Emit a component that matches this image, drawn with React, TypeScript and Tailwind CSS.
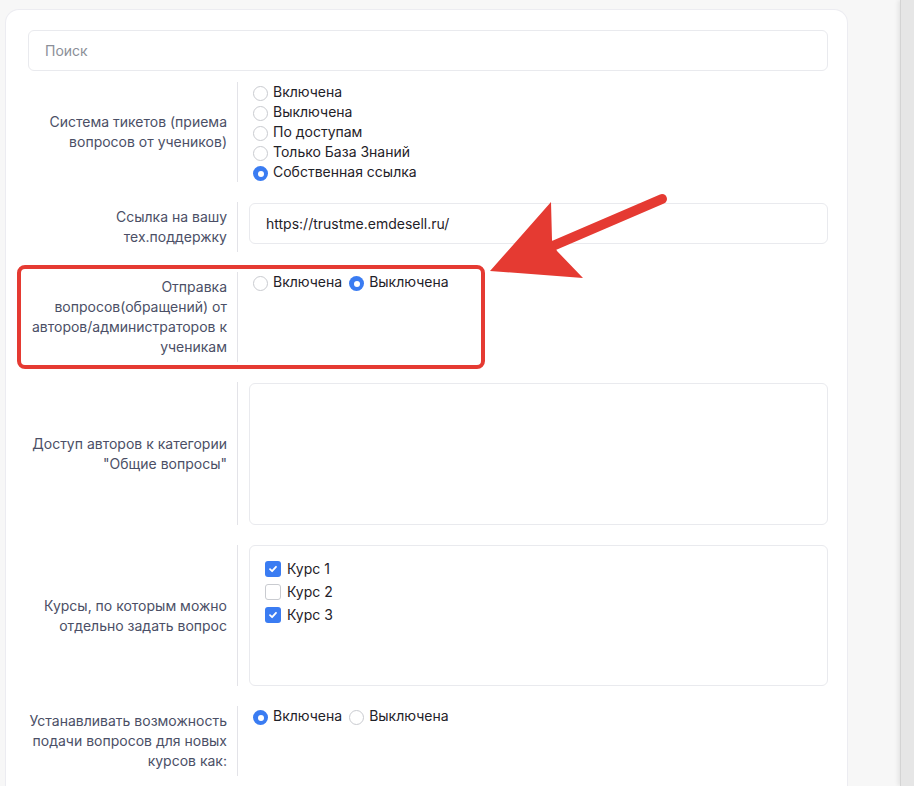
import React from 'react';

type RadioOpt = { label: string; checked?: boolean };

function Radio({ label, checked }: RadioOpt) {
  return (
    <label className="flex items-center h-[20px] mr-[3px] cursor-pointer">
      <span
        className={
          checked
            ? 'ml-[4px] mr-[5px] mt-[3px] w-[15px] h-[15px] rounded-full bg-[#3a7cf2] flex items-center justify-center shrink-0'
            : 'ml-[4px] mr-[5px] mt-[3px] w-[15px] h-[15px] rounded-full border border-[#c9cbd0] bg-white shrink-0'
        }
      >
        {checked && <span className="w-[6px] h-[6px] rounded-full bg-white" />}
      </span>
      <span className="text-[#1f2229]">{label}</span>
    </label>
  );
}

function Checkbox({ label, checked }: RadioOpt) {
  return (
    <label className="flex items-center h-[23px]">
      <span
        className={
          checked
            ? 'mr-[6px] w-[16px] h-[16px] rounded-[3px] bg-[#3a7cf2] flex items-center justify-center shrink-0'
            : 'mr-[6px] w-[16px] h-[16px] rounded-[3px] border border-[#c9cbd0] bg-white shrink-0'
        }
      >
        {checked && (
          <svg width="10" height="10" viewBox="0 0 10 10" fill="none">
            <path d="M2 5.2L4.1 7.2L8 2.8" stroke="white" strokeWidth="1.8" strokeLinecap="round" strokeLinejoin="round" />
          </svg>
        )}
      </span>
      <span className="text-[#1f2229]">{label}</span>
    </label>
  );
}

// строка формы: подпись слева, контент справа
function Row({ label, children, className = '' }: { label: React.ReactNode; children: React.ReactNode; className?: string }) {
  return (
    <div className={`relative grid grid-cols-[210px_1fr] ${className}`}>
      <div className="flex items-center justify-end text-right pr-[10px] py-[5px] border-r border-[#e3e3e8] text-[#4b4f66] leading-[20px]">
        <span>{label}</span>
      </div>
      <div className="pl-[11px]">{children}</div>
    </div>
  );
}

export default function App() {
  return (
    <div className="relative w-[914px] h-[786px] overflow-hidden flex bg-[#f7f7f7] font-['Inter',sans-serif] text-[14px] leading-[20px]">
      <div className="flex-1 pt-[9px] pl-[5px] pr-[52px]">
        <div className="bg-white rounded-t-[14px] border border-[#ececf1] border-b-0 pl-[22px] pr-[19px] pt-[20px] h-[900px]">
          {/* Поиск */}
          <input
            type="text"
            placeholder="Поиск"
            className="w-full h-[41px] px-[16px] rounded-[6px] border border-[#e9eaee] outline-none placeholder:text-[#8b8f98] text-[#1f2229]"
          />

          <div className="flex flex-col gap-[20px] mt-[11px]">
            <Row label="Система тикетов (приема вопросов от учеников)">
              <div className="flex flex-col">
                <Radio label="Включена" />
                <Radio label="Выключена" />
                <Radio label="По доступам" />
                <Radio label="Только База Знаний" />
                <Radio label="Собственная ссылка" checked />
              </div>
            </Row>

            <Row label="Ссылка на вашу тех.поддержку">
              <input
                type="text"
                defaultValue="https://trustme.emdesell.ru/"
                className="w-full h-[41px] mt-[1px] px-[16px] rounded-[6px] border border-[#e9eaee] outline-none text-[#1f2229]"
              />
            </Row>

            <Row label="Отправка вопросов(обращений) от авторов/администраторов к ученикам">
              <div className="flex">
                <Radio label="Включена" />
                <Radio label="Выключена" checked />
              </div>
              <div className="absolute left-[-11px] top-[-7px] w-[468px] h-[104px] border-4 border-[#e53a32] rounded-[8px] pointer-events-none" />
            </Row>

            <Row label={<>Доступ авторов к категории<br />"Общие вопросы"</>}>
              <textarea className="block w-full h-[142px] mt-[1px] rounded-[6px] border border-[#e9eaee] outline-none resize-none" />
            </Row>

            <Row label="Курсы, по которым можно отдельно задать вопрос">
              <div className="h-[141px] rounded-[6px] border border-[#e9eaee] pl-[15px] pt-[11px]">
                <Checkbox label="Курс 1" checked />
                <Checkbox label="Курс 2" />
                <Checkbox label="Курс 3" checked />
              </div>
            </Row>

            <Row label="Устанавливать возможность подачи вопросов для новых курсов как:">
              <div className="flex">
                <Radio label="Включена" checked />
                <Radio label="Выключена" />
              </div>
            </Row>
          </div>
        </div>
      </div>

      {/* полоса справа */}
      <div className="w-[14px] h-full bg-[#e6e6e6] border-l border-[#d4d4d4] shadow-[-2px_0_4px_rgba(0,0,0,0.08)]" />

      {/* стрелка-аннотация */}
      <svg className="absolute left-0 top-0 pointer-events-none" width="914" height="786" viewBox="0 0 914 786">
        <line x1="555" y1="245" x2="662" y2="199" stroke="#e53a32" strokeWidth="10" strokeLinecap="round" />
        <polygon points="490,271 551,202 552,240 557,251 583,278" fill="#e53a32" />
      </svg>
    </div>
  );
}
